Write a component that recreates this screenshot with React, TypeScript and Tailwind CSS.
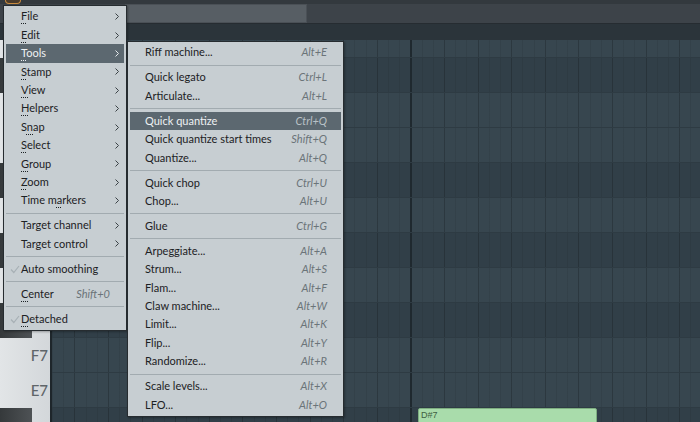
import React from "react";

type MenuEntry =
  | { sep: true }
  | {
      sep?: false;
      label: string;
      mn?: number;
      shortcut?: string;
      sub?: boolean;
      hl?: boolean;
      check?: boolean;
    };

const mainMenu: MenuEntry[] = [
  { label: "File", mn: 0, sub: true },
  { label: "Edit", mn: 0, sub: true },
  { label: "Tools", mn: 0, sub: true, hl: true },
  { label: "Stamp", mn: 0, sub: true },
  { label: "View", mn: 0, sub: true },
  { label: "Helpers", mn: 0, sub: true },
  { label: "Snap", mn: 1, sub: true },
  { label: "Select", mn: 0, sub: true },
  { label: "Group", mn: 0, sub: true },
  { label: "Zoom", mn: 0, sub: true },
  { label: "Time markers", mn: 6, sub: true },
  { sep: true },
  { label: "Target channel", sub: true },
  { label: "Target control", sub: true },
  { sep: true },
  { label: "Auto smoothing", check: true },
  { sep: true },
  { label: "Center", mn: 0, shortcut: "Shift+0" },
  { sep: true },
  { label: "Detached", mn: 0, check: true },
];

const toolsMenu: MenuEntry[] = [
  { label: "Riff machine...", shortcut: "Alt+E" },
  { sep: true },
  { label: "Quick legato", shortcut: "Ctrl+L" },
  { label: "Articulate...", shortcut: "Alt+L" },
  { sep: true },
  { label: "Quick quantize", shortcut: "Ctrl+Q", hl: true },
  { label: "Quick quantize start times", shortcut: "Shift+Q" },
  { label: "Quantize...", shortcut: "Alt+Q" },
  { sep: true },
  { label: "Quick chop", shortcut: "Ctrl+U" },
  { label: "Chop...", shortcut: "Alt+U" },
  { sep: true },
  { label: "Glue", shortcut: "Ctrl+G" },
  { sep: true },
  { label: "Arpeggiate...", shortcut: "Alt+A" },
  { label: "Strum...", shortcut: "Alt+S" },
  { label: "Flam...", shortcut: "Alt+F" },
  { label: "Claw machine...", shortcut: "Alt+W" },
  { label: "Limit...", shortcut: "Alt+K" },
  { label: "Flip...", shortcut: "Alt+Y" },
  { label: "Randomize...", shortcut: "Alt+R" },
  { sep: true },
  { label: "Scale levels...", shortcut: "Alt+X" },
  { label: "LFO...", shortcut: "Alt+O" },
];

// piano roll rows from top (partly hidden) down to D#7
const rows = [
  { note: "D8", black: false },
  { note: "C#8", black: true },
  { note: "C8", black: false },
  { note: "B7", black: false },
  { note: "A#7", black: true },
  { note: "A7", black: false },
  { note: "G#7", black: true },
  { note: "G7", black: false },
  { note: "F#7", black: true },
  { note: "F7", black: false },
  { note: "E7", black: false },
  { note: "D#7", black: true },
];

// bar line at x=411, beat lines every 3 steps, step lines every 11.2px
const gridLines =
  "bg-[image:linear-gradient(90deg,transparent_358px,#1f292f_358px_360px,transparent_360px),repeating-linear-gradient(90deg,transparent_0_22.4px,rgba(0,0,0,0.14)_22.4px_23.4px,transparent_23.4px_33.6px),repeating-linear-gradient(90deg,rgba(0,0,0,0.07)_0_1px,transparent_1px_11.2px)]";

const Label = ({ text, mn }: { text: string; mn?: number }) => {
  if (mn === undefined) return <span>{text}</span>;
  return (
    <span>
      {text.slice(0, mn)}
      <span className="underline decoration-dotted underline-offset-[3px] decoration-[1px]">
        {text.charAt(mn)}
      </span>
      {text.slice(mn + 1)}
    </span>
  );
};

const Chevron = ({ light }: { light?: boolean }) => (
  <svg width="6" height="9" viewBox="0 0 6 9" className="shrink-0">
    <path
      d="M1.5 1.5 L4.5 4.5 L1.5 7.5"
      fill="none"
      stroke={light ? "#e6eaec" : "#3a4145"}
      strokeWidth="1"
    />
  </svg>
);

const Check = () => (
  <svg width="10" height="9" viewBox="0 0 10 9" className="absolute left-[4px] top-[5px]">
    <path d="M1 4.5 L3.8 7.5 L9 1" fill="none" stroke="#a7b0b5" strokeWidth="1.2" />
  </svg>
);

const Menu = ({ items, width, className }: { items: MenuEntry[]; width: string; className: string }) => (
  <div className={`absolute ${width} ${className} bg-[#c7ced2] border border-[#262c30] px-[2px] pt-[1.5px] pb-[2px] shadow-[1px_1px_2px_rgba(0,0,0,0.3)]`}>
    {items.map((it, i) =>
      it.sep ? (
        <div key={i} className="h-[6.6px] flex items-center">
          <div className="w-full h-px bg-[#a2abb0]" />
        </div>
      ) : (
        <div
          key={i}
          className={`relative h-[18.4px] flex items-center pl-[15px] pr-[4px] text-[11px] ${
            it.hl ? "bg-[#5c6870] text-[#eef1f3]" : "text-[#1c2124]"
          }`}
        >
          {it.check && <Check />}
          <Label text={it.label} mn={it.mn} />
          <span className="flex-1" />
          {it.shortcut && (
            <span
              className={`italic pr-[10px] ${it.hl ? "text-[#b9c1c6]" : "text-[#6b7479]"}`}
            >
              {it.shortcut}
            </span>
          )}
          {it.sub && <Chevron light={it.hl} />}
        </div>
      )
    )}
  </div>
);

const TopBar = () => (
  <div className="h-[40px] flex flex-col">
    <div className="h-[4px] bg-[#33393e] flex">
      <div className="ml-[5px] w-[16px] h-[4px] rounded-b-[4px] border-x border-b border-[#c98b3e] bg-[#4a3b2b]" />
    </div>
    <div className="h-[19px] bg-[#3d4349] flex">
      <div className="w-[125px]" />
      <div className="w-[182px] bg-[#575e64] border border-[#4a5056]" />
    </div>
    <div className="h-px bg-[#262c31]" />
    <div className="h-[16px] bg-[#2b343a]" />
  </div>
);

const PianoRoll = () => (
  <div className="flex h-[382px] overflow-hidden">
    <div className="w-[52px] border-r-2 border-[#1e262b] flex flex-col -mt-[17px] shrink-0">
      {rows.map((r) => (
        <div
          key={r.note}
          className="h-[35px] shrink-0 flex items-center bg-[linear-gradient(90deg,#e2e5e7,#d3d7da)]"
        >
          {r.black ? (
            <div className="w-[32px] h-full bg-[linear-gradient(90deg,#35393b,#4e5255)]" />
          ) : (
            <div className="flex-1 text-right pr-[2px] text-[15px] font-medium text-[#5f6569]">
              {r.note}
            </div>
          )}
        </div>
      ))}
    </div>
    <div className="flex-1 flex flex-col -mt-[17px]">
      {rows.map((r) => (
        <div
          key={r.note}
          className={`relative h-[35px] shrink-0 border-b border-[#2e3b43] ${gridLines} ${
            r.black ? "bg-[#313f48]" : "bg-[#37464f]"
          }`}
        >
          {r.note === "D#7" && (
            <div className="absolute left-[366px] top-0 w-[179px] h-[35px] bg-[#a9dcab] border border-[#7eae81] rounded-[2px] px-[2px] text-[9px] leading-[13px] text-[#3f5f42] font-['Liberation_Sans',sans-serif]">
              D#7
            </div>
          )}
        </div>
      ))}
    </div>
  </div>
);

export default function App() {
  return (
    <div className="relative w-[700px] h-[422px] overflow-hidden bg-[#2b343a] font-['Lato','Noto_Sans',sans-serif]">
      <TopBar />
      <PianoRoll />
      <Menu items={mainMenu} width="w-[124px]" className="left-[3px] top-[5px]" />
      <Menu items={toolsMenu} width="w-[217px]" className="left-[127px] top-[41px]" />
    </div>
  );
}
